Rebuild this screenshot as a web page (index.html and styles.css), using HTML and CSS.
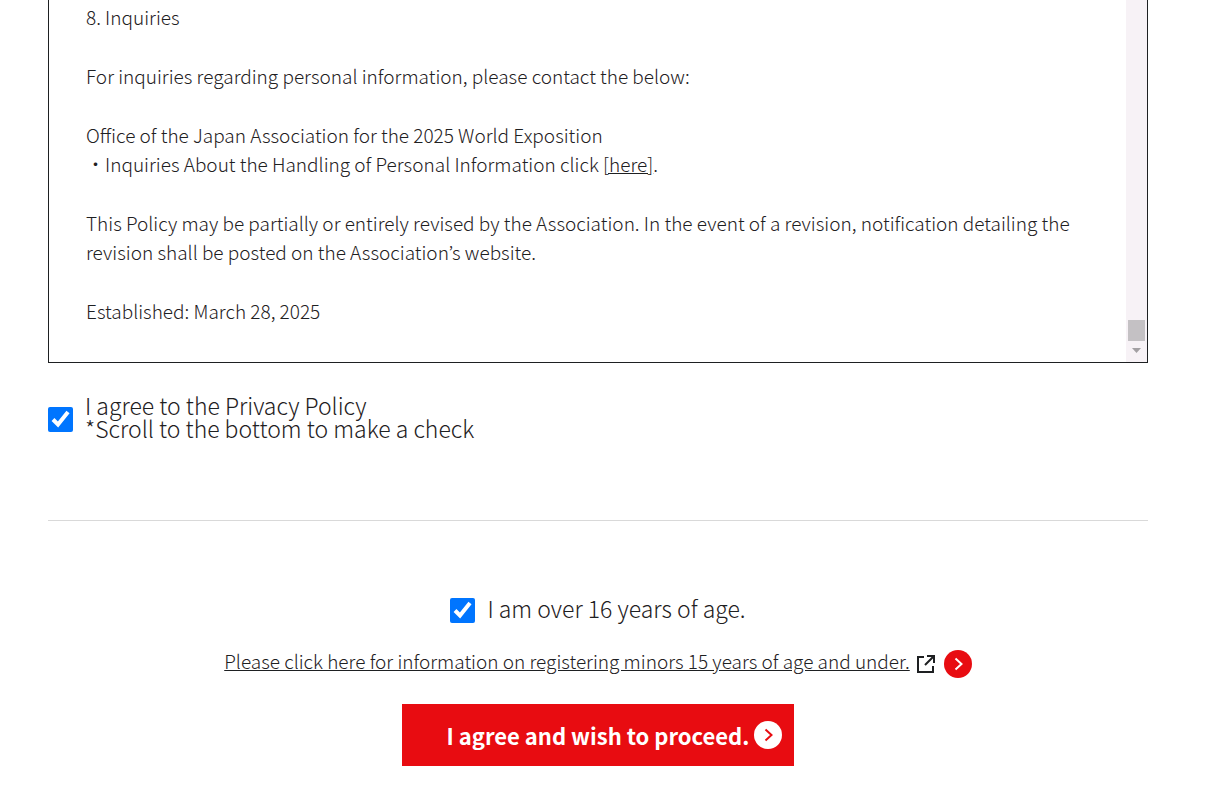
FILE: index.html
```
<!DOCTYPE html>
<html lang="en">
<head>
    <meta charset="utf-8">
    <title>Privacy Policy</title>
    <link rel="stylesheet" href="styles.css">
</head>
<body>
    <main class="page">
        <section class="policy-box">
            <div class="policy-text">
                <p>8. Inquiries</p>
                <p>For inquiries regarding personal information, please contact the below:</p>
                <p>Office of the Japan Association for the 2025 World Exposition<br>
                <span lang="ja">・</span>Inquiries About the Handling of Personal Information click <a href="#">[here]</a>.</p>
                <p>This Policy may be partially or entirely revised by the Association. In the event of a revision, notification detailing the revision shall be posted on the Association’s website.</p>
                <p>Established: March 28, 2025</p>
            </div>
            <div class="scrollbar">
                <div class="thumb"></div>
                <svg class="scroll-down" viewBox="0 0 21 21"><path d="M6 7h9l-4.500 5z"/></svg>
            </div>
        </section>

        <div class="check policy-check">
            <input type="checkbox" id="agree" checked>
            <label for="agree">I agree to the Privacy Policy<br>*Scroll to the bottom to make a check</label>
        </div>

        <section class="confirm">
            <div class="check">
                <input type="checkbox" id="age" checked>
                <label for="age">I am over 16 years of age.</label>
            </div>
            <a class="minors" href="#">
                <span>Please click here for information on registering minors 15 years of age and under.</span>
                <svg class="external" viewBox="0 0 20 20"><path d="M8 3H2v15h15v-6M11 2h7v7M18 2l-9 9"/></svg>
                <svg class="arrow" viewBox="0 0 28 28"><circle cx="14" cy="14" r="14"/><path d="M11.500 8.500l6 5.500-6 5.500"/></svg>
            </a>
            <button class="proceed" type="button">
                I agree and wish to proceed.
                <svg class="arrow arrow-white" viewBox="0 0 28 28"><circle cx="14" cy="14" r="14"/><path d="M11.500 8.500l6 5.500-6 5.500"/></svg>
            </button>
        </section>
    </main>
</body>
</html>
```
FILE: styles.css
```
* {
    box-sizing: border-box;
}
body {
    margin: 0;
    color: #1e2022;
    background-color: #fff;
    font-family: "Noto Sans CJK JP", sans-serif;
    font-size: 19px;
    font-weight: 300;
    line-height: 29px;
}
a {
    color: inherit;
}
.page {
    max-width: 1196px;
    padding: 0 48px;
}
.policy-box {
    display: flex;
    border: 1px solid #1e2022;
    border-top: none;
}
.policy-text {
    flex: 1;
    padding: 2px 37px 37px;
}
.policy-text p {
    margin: 0 0 30px;
}
.policy-text p:last-child {
    margin-bottom: 0;
}
.scrollbar {
    display: flex;
    flex-direction: column;
    justify-content: flex-end;
    align-items: center;
    width: 21px;
    background-color: #f7f2f6;
}
.thumb {
    width: 17px;
    height: 21px;
    background-color: #c4c1c4;
}
.scroll-down {
    width: 21px;
    height: 21px;
    fill: #a3a0a3;
}
.check {
    display: flex;
    align-items: center;
    gap: 12px;
    font-size: 23px;
    line-height: 23px;
}
.check input {
    width: 25px;
    height: 25px;
    margin: 0;
}
.check label {
    padding-bottom: 4px;
}
.policy-check {
    padding: 31px 0 76px;
    border-bottom: 1px solid #d9d9d9;
}
.confirm {
    display: flex;
    flex-direction: column;
    align-items: center;
    padding-top: 76px;
}
.minors {
    display: flex;
    align-items: center;
    margin-top: 22px;
}
.minors span {
    padding-bottom: 6px;
}
.external {
    width: 20px;
    height: 20px;
    margin: 0 8px 0 6px;
    fill: none;
    stroke: #1e2022;
    stroke-width: 2;
}
.arrow {
    width: 28px;
    height: 28px;
    fill: #e80c11;
}
.arrow path {
    fill: none;
    stroke: #fff;
    stroke-width: 2;
}
.proceed {
    display: flex;
    align-items: center;
    gap: 5px;
    height: 62px;
    margin-top: 23px;
    padding: 0 12px 0 45px;
    border: none;
    color: #fff;
    background-color: #e80c11;
    font-family: inherit;
    font-size: 22px;
    font-weight: 700;
    cursor: pointer;
}
.arrow-white {
    fill: #fff;
}
.arrow-white path {
    stroke: #e80c11;
}
```
